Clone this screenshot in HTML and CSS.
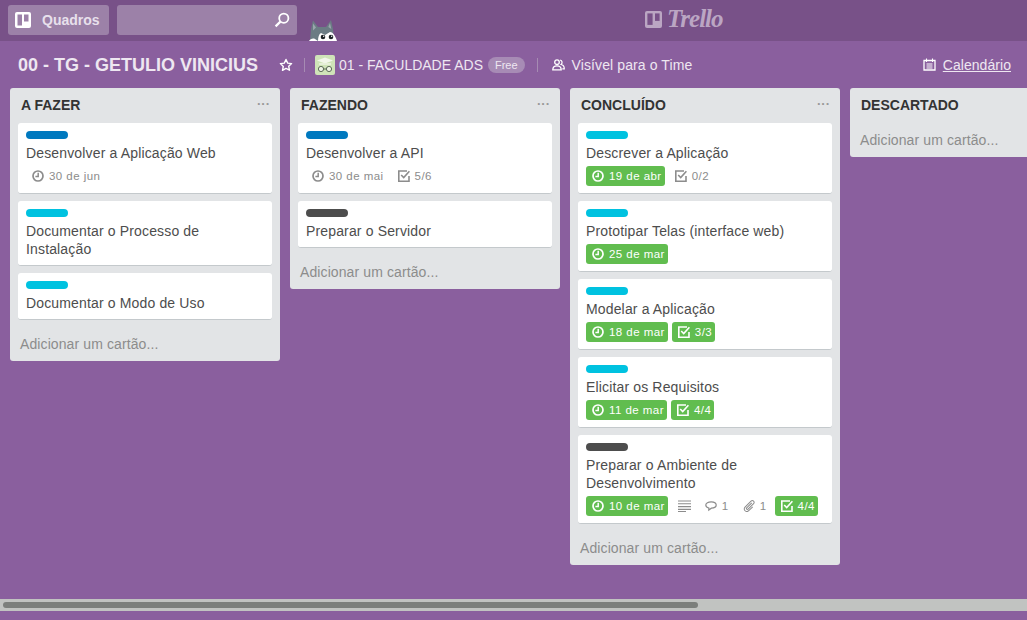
FILE: index.html
```html
<!DOCTYPE html>
<html lang="pt-BR">
<head>
<meta charset="utf-8">
<title>00 - TG - GETULIO VINICIUS</title>
<link rel="stylesheet" href="styles.css">
</head>
<body>
<svg class="defs" width="0" height="0" aria-hidden="true">
  <symbol id="i-clock" viewBox="0 0 12 12"><circle cx="6" cy="6" r="5" fill="none" stroke="currentColor" stroke-width="1.7"/><path d="M6.200 2.800v3.600H3.400" fill="none" stroke="currentColor" stroke-width="1.500"/></symbol>
  <symbol id="i-check" viewBox="0 0 12 12"><path d="M9 1H.8v10.200H11V6" fill="none" stroke="currentColor" stroke-width="1.600"/><path d="M3.200 5l2.500 2.600L11.400 1.200" fill="none" stroke="currentColor" stroke-width="1.600"/></symbol>
</svg>
<header class="topbar">
  <a class="btn boards"><svg class="boards-icon" viewBox="0 0 16 16"><rect width="16" height="16" rx="2" fill="#fff"/><rect x="2.500" y="2.500" width="4.500" height="11" fill="#9c81a8"/><rect x="9" y="2.500" width="4.500" height="7" fill="#9c81a8"/></svg><span>Quadros</span></a>
  <div class="search"><svg class="search-icon" viewBox="0 0 16 16"><circle cx="9.800" cy="6.200" r="4.600" fill="none" stroke="#fff" stroke-width="1.800"/><path d="M6.400 9.600L1.600 14.400" stroke="#fff" stroke-width="2.200"/></svg></div>
  <svg class="husky" viewBox="0 0 28 21"><path d="M1 21L2 9 4 .5l5 6.500h8L22 0l2 9 1 12z" fill="#6b7c84"/><path d="M4 3.500l3 4-3 3z" fill="#9aa7ad"/><path d="M21 3l1.300 6-3-2z" fill="#9aa7ad"/><path d="M0 21c1-2 4-3 6-2l3 2zM9 21c0-4 1-7 3-8l4 2 5-3c3 0 6 5 7 9z" fill="#fff"/><circle cx="14" cy="17" r="2.300" fill="#1d2327"/><circle cx="22" cy="17" r="2.300" fill="#1d2327"/><circle cx="14.700" cy="16.300" r=".7" fill="#fff"/><circle cx="22.700" cy="16.300" r=".7" fill="#fff"/></svg>
  <div class="logo"><svg class="logo-icon" viewBox="0 0 17 17"><rect width="17" height="17" rx="2" fill="#bba6c3"/><rect x="2.400" y="2.400" width="5.200" height="11.500" fill="#785188"/><rect x="10" y="2.400" width="4.600" height="7.500" fill="#785188"/></svg><span class="logo-word">Trello</span></div>
</header>
<section class="boardbar">
  <h1 class="board-title">00 - TG - GETULIO VINICIUS</h1>
  <svg class="star" viewBox="0 0 14 14"><path d="M7 1.500l1.700 3.600 3.900.5-2.900 2.700.8 3.900L7 10.400l-3.500 1.900.8-3.900L1.400 5.600l3.900-.5z" fill="none" stroke="#fff" stroke-width="1.400" stroke-linejoin="round"/></svg>
  <i class="sep"></i>
  <svg class="team-logo" viewBox="0 0 20 20"><rect width="20" height="20" rx="2" fill="#cfe3b8"/><path d="M2 5.500l8-3 8 3-8 3z" fill="#f2f6ea"/><path d="M4 8h12v2H4z" fill="#e6efd8"/><circle cx="6" cy="14" r="2.600" fill="#eef3e6" stroke="#5d6b58"/><circle cx="14" cy="14" r="2.600" fill="#eef3e6" stroke="#5d6b58"/><path d="M8.600 14h2.800" stroke="#5d6b58"/></svg>
  <span class="team-name">01 - FACULDADE ADS</span>
  <span class="free">Free</span>
  <i class="sep sep-b"></i>
  <svg class="vis-icon" viewBox="0 0 13 12"><circle cx="5" cy="3.200" r="2.300" fill="none" stroke="#fff" stroke-width="1.300"/><path d="M.8 10.800c0-2.800 1.600-4 4.200-4s4.200 1.200 4.200 4z" fill="none" stroke="#fff" stroke-width="1.300"/><path d="M8.200 1.200c2 .3 2.600 3 .9 4.200 2.200.6 3.200 2.300 3.200 4.400h-2" fill="none" stroke="#fff" stroke-width="1.200"/></svg>
  <span class="visibility">Visível para o Time</span>
  <span class="calendar"><svg class="cal-icon" viewBox="0 0 13 13"><path d="M1 2.500h11v9.500H1z" fill="none" stroke="#fff" stroke-width="1.300"/><path d="M3.500.5v3.500M9.500.5v3.500M3.500 6h6M3.500 8h6M3.500 10h6" stroke="#fff" stroke-width="1.100"/></svg><u>Calendário</u></span>
</section>
<main class="board">
  <section class="list">
    <div class="list-head"><h2>A FAZER</h2><span class="dots">···</span></div>
    <article class="card"><i class="label blue"></i><p>Desenvolver a Aplicação Web</p><div class="badges"><span class="badge plain"><svg class="ic"><use href="#i-clock"/></svg>30 de jun</span></div></article>
    <article class="card"><i class="label cyan"></i><p>Documentar o Processo de Instalação</p></article>
    <article class="card"><i class="label cyan"></i><p>Documentar o Modo de Uso</p></article>
    <a class="add">Adicionar um cartão...</a>
  </section>
  <section class="list">
    <div class="list-head"><h2>FAZENDO</h2><span class="dots">···</span></div>
    <article class="card"><i class="label blue"></i><p>Desenvolver a API</p><div class="badges"><span class="badge plain"><svg class="ic"><use href="#i-clock"/></svg>30 de mai</span><span class="badge plain"><svg class="ic"><use href="#i-check"/></svg>5/6</span></div></article>
    <article class="card"><i class="label dark"></i><p>Preparar o Servidor</p></article>
    <a class="add">Adicionar um cartão...</a>
  </section>
  <section class="list">
    <div class="list-head"><h2>CONCLUÍDO</h2><span class="dots">···</span></div>
    <article class="card"><i class="label cyan"></i><p>Descrever a Aplicação</p><div class="badges"><span class="badge done"><svg class="ic"><use href="#i-clock"/></svg>19 de abr</span><span class="badge plain"><svg class="ic"><use href="#i-check"/></svg>0/2</span></div></article>
    <article class="card"><i class="label cyan"></i><p>Prototipar Telas (interface web)</p><div class="badges"><span class="badge done"><svg class="ic"><use href="#i-clock"/></svg>25 de mar</span></div></article>
    <article class="card"><i class="label cyan"></i><p>Modelar a Aplicação</p><div class="badges"><span class="badge done"><svg class="ic"><use href="#i-clock"/></svg>18 de mar</span><span class="badge done"><svg class="ic"><use href="#i-check"/></svg>3/3</span></div></article>
    <article class="card"><i class="label cyan"></i><p>Elicitar os Requisitos</p><div class="badges"><span class="badge done"><svg class="ic"><use href="#i-clock"/></svg>11 de mar</span><span class="badge done"><svg class="ic"><use href="#i-check"/></svg>4/4</span></div></article>
    <article class="card"><i class="label dark"></i><p>Preparar o Ambiente de Desenvolvimento</p><div class="badges"><span class="badge done"><svg class="ic"><use href="#i-clock"/></svg>10 de mar</span><span class="badge plain desc"><svg class="ic ic-lines" viewBox="0 0 13 12"><path d="M0 1h13M0 3.800h13M0 6.600h13M0 9.400h13M0 11.600h8" stroke="currentColor" stroke-width="1.100"/></svg></span><span class="badge plain meta"><svg class="ic" viewBox="0 0 12 12"><path d="M6.200 1.800c2.800 0 5 1.200 5 3.200s-2.200 3.200-4.800 3.200L3.800 10V8C1.800 7.500.8 6.400.8 5c0-2 2.500-3.200 5.400-3.200z" fill="none" stroke="currentColor" stroke-width="1.200"/></svg>1</span><span class="badge plain meta meta-end"><svg class="ic" viewBox="0 0 13 13"><path d="M9.500 3L4 8.500c-1 1 .5 2.500 1.500 1.500l6-6c1.800-1.800-1-4.500-2.800-2.800L2.200 7.800c-2.600 2.600 1.400 6.400 4 3.800L10.500 7.500" fill="none" stroke="currentColor" stroke-width="1.100"/></svg>1</span><span class="badge done"><svg class="ic"><use href="#i-check"/></svg>4/4</span></div></article>
    <a class="add">Adicionar um cartão...</a>
  </section>
  <section class="list list-cut">
    <div class="list-head"><h2>DESCARTADO</h2></div>
    <a class="add">Adicionar um cartão...</a>
  </section>
</main>
<div class="scrollbar"><div class="thumb"></div></div>
</body>
</html>
```
FILE: styles.css
```css
* { box-sizing: border-box; }
html, body { height: 100%; }
body {
  margin: 0;
  width: 1027px;
  height: 620px;
  overflow: hidden;
  display: flex;
  flex-direction: column;
  background: #8a5f9e;
  font-family: "Liberation Sans", Arial, sans-serif;
  color: #4d4d4d;
}
.defs { position: absolute; }
.topbar {
  position: relative;
  flex: none;
  height: 41px;
  background: #785188;
  display: flex;
  align-items: flex-start;
  padding: 5px 0 0 8px;
}
.btn.boards {
  width: 101px;
  height: 30px;
  background: #9c81a8;
  border-radius: 3px;
  display: flex;
  align-items: center;
  padding-left: 7px;
  color: #e8e0ec;
  font-size: 14px;
  font-weight: 700;
}
.boards-icon { width: 16px; height: 16px; margin-right: 11px; }
.search {
  width: 180px;
  height: 30px;
  margin-left: 8px;
  background: #9c81a8;
  border-radius: 3px;
  display: flex;
  align-items: center;
  justify-content: flex-end;
  padding-right: 7px;
}
.search-icon { width: 16px; height: 16px; }
.husky { width: 28px; height: 21px; margin: 15px 0 0 12px; }
.logo {
  position: absolute;
  left: 645px;
  top: 6px;
  display: flex;
  align-items: center;
  color: #bba6c3;
}
.logo-icon { width: 17px; height: 17px; margin-right: 5px; }
.logo-word {
  font-family: "Liberation Serif", serif;
  font-style: italic;
  font-weight: 700;
  font-size: 25px;
  line-height: 26px;
  letter-spacing: -1px;
}
.boardbar {
  flex: none;
  height: 47px;
  display: flex;
  align-items: center;
  padding: 0 16px 0 18px;
  color: #eee7f1;
  font-size: 14px;
}
.board-title {
  margin: 0 21px 0 0;
  font-size: 18px;
  font-weight: 700;
  line-height: 22px;
}
.star { width: 14px; height: 14px; }
.sep { width: 1px; height: 14px; background: #a68bb3; margin: 0 10px 0 11px; }
.team-logo { width: 20px; height: 20px; margin-right: 4px; }
.team-name { margin-right: 5px; }
.free {
  height: 16px;
  padding: 0 7px;
  border-radius: 8px;
  background: #a78bb5;
  font-size: 11px;
  line-height: 16px;
}
.sep-b { margin: 0 14px 0 12px; }
.vis-icon { width: 13px; height: 12px; margin-right: 7px; }
.visibility { letter-spacing: .1px; }
.calendar { margin-left: auto; display: flex; align-items: center; letter-spacing: .05px; }
.cal-icon { width: 13px; height: 13px; margin-right: 7px; }
.board {
  flex: 1;
  min-height: 0;
  display: flex;
  align-items: flex-start;
  gap: 10px;
  padding-left: 10px;
  overflow: hidden;
}
.list {
  flex: none;
  width: 270px;
  background: #e2e4e6;
  border-radius: 3px;
}
.list-cut { width: 177px; border-radius: 3px 0 0 3px; }
.list-head {
  height: 35px;
  display: flex;
  justify-content: space-between;
  padding: 8px 10px 0 11px;
}
.list-head h2 {
  margin: 0;
  font-size: 14px;
  line-height: 18px;
  font-weight: 700;
  color: #333;
}
.dots { color: #999; font-size: 13px; font-weight: 700; line-height: 16px; }
.card {
  margin: 0 8px 7px;
  padding: 8px 8px 0;
  background: #fff;
  border-radius: 3px;
  border-bottom: 1px solid #c4c9cc;
  display: flow-root;
}
.label {
  display: block;
  width: 42px;
  height: 8px;
  border-radius: 4px;
}
.blue { background: #0079bf; }
.cyan { background: #00c2e0; }
.dark { background: #4d4d4d; }
.card p {
  margin: 5px 0 7px;
  font-size: 14px;
  line-height: 18px;
  letter-spacing: .15px;
  color: #4d4d4d;
}
.badges {
  display: flex;
  align-items: center;
  margin-top: -3px;
  height: 20px;
  margin-bottom: 7px;
}
.badge {
  display: inline-flex;
  align-items: center;
  height: 20px;
  padding: 0 3px 0 6px;
  font-size: 11.5px;
  letter-spacing: .45px;
  white-space: nowrap;
}
.ic { width: 12px; height: 12px; margin-right: 5px; flex: none; }
.ic-lines { width: 13px; margin-right: 6px; }
.done {
  background: #61bd4f;
  color: #fff;
  border-radius: 3px;
  margin-right: 4px;
}
.plain { color: #8c8c8c; }
.plain + .plain { margin-left: 5px; }
.desc { padding-right: 2px; }
.desc + .plain { margin-left: 0; }
.meta-end { margin-right: 5px; }
.add {
  display: block;
  height: 34px;
  padding: 8px 10px 0;
  font-size: 14px;
  line-height: 18px;
  letter-spacing: .1px;
  color: #8c8c8c;
}
.scrollbar {
  flex: none;
  height: 12px;
  margin-bottom: 9px;
  background: #c1c3c1;
  display: flex;
  align-items: center;
  padding: 0 0 0 3px;
}
.thumb { width: 695px; height: 6px; background: #7c7f7c; border-radius: 3px; }
```
